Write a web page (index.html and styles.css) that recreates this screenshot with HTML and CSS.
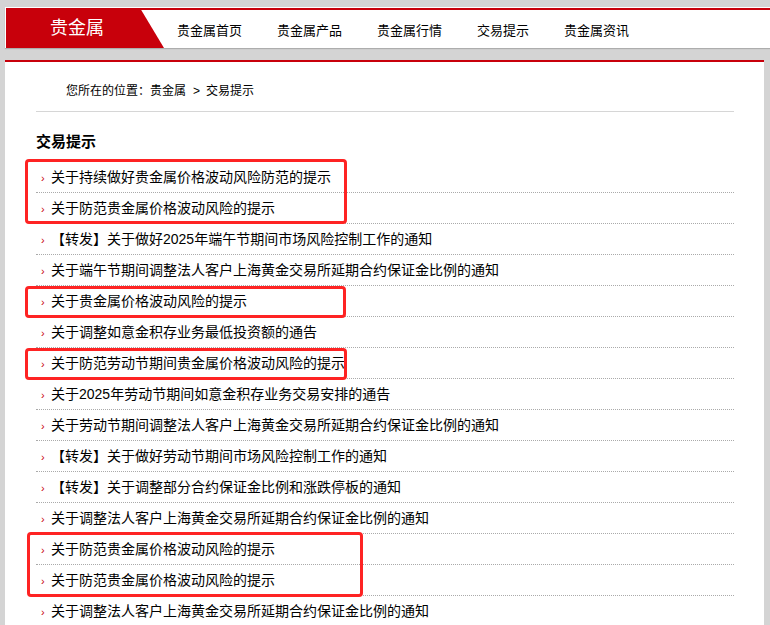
FILE: index.html
```html
<!DOCTYPE html>
<html lang="zh-CN">
<head>
  <meta charset="UTF-8">
  <meta name="viewport" content="width=device-width, initial-scale=1.0">
  <title>交易提示 - 贵金属</title>
  <link rel="stylesheet" href="styles.css">
</head>
<body>
  <div class="topbar">
    <div class="topbar-inner">
      <div class="logo">贵金属</div>
      <ul class="nav">
        <li><a href="#">贵金属首页</a></li>
        <li><a href="#">贵金属产品</a></li>
        <li><a href="#">贵金属行情</a></li>
        <li><a href="#">交易提示</a></li>
        <li><a href="#">贵金属资讯</a></li>
      </ul>
    </div>
  </div>

  <div class="panel">
    <div class="crumb">
      您所在的位置：<a href="#">贵金属</a><span class="sep">&gt;</span><a href="#">交易提示</a>
    </div>

    <h2 class="title">交易提示</h2>

    <div class="list-wrap">
      <ul class="news">
        <li><a href="#">关于持续做好贵金属价格波动风险防范的提示</a></li>
        <li><a href="#">关于防范贵金属价格波动风险的提示</a></li>
        <li><a href="#">【转发】关于做好2025年端午节期间市场风险控制工作的通知</a></li>
        <li><a href="#">关于端午节期间调整法人客户上海黄金交易所延期合约保证金比例的通知</a></li>
        <li><a href="#">关于贵金属价格波动风险的提示</a></li>
        <li><a href="#">关于调整如意金积存业务最低投资额的通告</a></li>
        <li><a href="#">关于防范劳动节期间贵金属价格波动风险的提示</a></li>
        <li><a href="#">关于2025年劳动节期间如意金积存业务交易安排的通告</a></li>
        <li><a href="#">关于劳动节期间调整法人客户上海黄金交易所延期合约保证金比例的通知</a></li>
        <li><a href="#">【转发】关于做好劳动节期间市场风险控制工作的通知</a></li>
        <li><a href="#">【转发】关于调整部分合约保证金比例和涨跌停板的通知</a></li>
        <li><a href="#">关于调整法人客户上海黄金交易所延期合约保证金比例的通知</a></li>
        <li><a href="#">关于防范贵金属价格波动风险的提示</a></li>
        <li><a href="#">关于防范贵金属价格波动风险的提示</a></li>
        <li><a href="#">关于调整法人客户上海黄金交易所延期合约保证金比例的通知</a></li>
      </ul>

      <!-- red markers drawn over the list -->
      <div class="mark mark-1"></div>
      <div class="mark mark-2"></div>
      <div class="mark mark-3"></div>
      <div class="mark mark-4"></div>
    </div>
  </div>
</body>
</html>
```

FILE: styles.css
```css
body {
  margin: 0;
  background: #d4d4d4;
  font-family: "Liberation Sans", "Noto Sans CJK SC", sans-serif;
  color: #000;
  overflow: hidden;
}

a {
  color: inherit;
  text-decoration: none;
}

ul {
  list-style: none;
  margin: 0;
  padding: 0;
}

/* top bar */
.topbar {
  margin: 7px 0 0 5px;
  padding: 1px 0 0 1px;
  background: #fff;
  box-shadow: 0 1px 1px rgba(0, 0, 0, 0.18);
}

.topbar-inner {
  display: flex;
  height: 38px;
  border-top: 2px solid #c8000b;
}

.logo {
  width: 114px;
  height: 40px;
  margin-top: -2px;
  padding-left: 44px;
  background: #c8000b;
  clip-path: polygon(0 0, 134px 0, 158px 100%, 0 100%);
  color: #fff;
  font-size: 18px;
  line-height: 40px;
}

.nav {
  display: flex;
  align-items: center;
  margin-left: 13px;
}

.nav li {
  margin-right: 35px;
  font-size: 13px;
}

/* content panel */
.panel {
  margin: 12px 6px 0 5px;
  padding: 0 30px 0 31px;
  height: 563px;
  overflow: hidden;
  background: #fff;
  border-top: 2px solid #c8000b;
}

.crumb {
  padding: 19px 0 10px 30px;
  font-size: 12px;
  line-height: 20px;
  border-bottom: 1px solid #d6d6d6;
}

.crumb .sep {
  margin: 0 6px 0 7px;
}

.title {
  margin: 20px 0 0;
  font-size: 15px;
  font-weight: bold;
  line-height: 20px;
}

.list-wrap {
  position: relative;
  margin-top: 10px;
}

.news li {
  height: 30px;
  padding-left: 5px;
  font-size: 14px;
  line-height: 30px;
  border-bottom: 1px dotted #aaa;
  white-space: nowrap;
}

.news li::before {
  content: "›";
  display: inline-block;
  width: 10px;
  color: #c8000b;
  font-size: 11px;
}

.mark {
  position: absolute;
  border: 3px solid #fe2323;
  border-radius: 4px;
  box-sizing: border-box;
}

.mark-1 { left: -11px; top: -3px;  width: 322px; height: 65px; }
.mark-2 { left: -11px; top: 124px; width: 321px; height: 32px; }
.mark-3 { left: -11px; top: 186px; width: 322px; height: 32px; }
.mark-4 { left: -9px;  top: 370px; width: 336px; height: 65px; }
```
